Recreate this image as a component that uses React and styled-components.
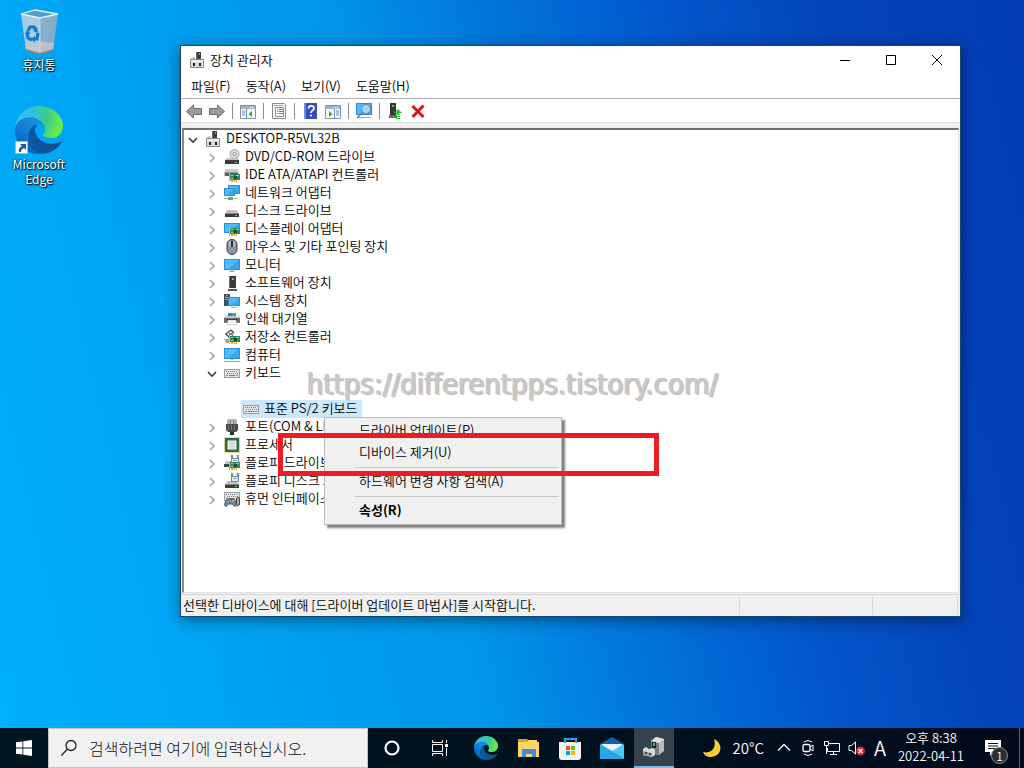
import { useState } from "react";
import styled, { createGlobalStyle, css } from "styled-components";

const GlobalStyle = createGlobalStyle`
  * {
    box-sizing: border-box;
  }
  body {
    margin: 0;
    font-family: "Noto Sans CJK KR", "Noto Sans", sans-serif;
    font-size: 13px;
    font-weight: 350;
    line-height: 18px;
    color: #000;
  }
  button, input {
    margin: 0;
    padding: 0;
    border: 0;
    background: none;
    font: inherit;
    color: inherit;
  }
`;

/* ---------- shared icon pieces ---------- */

const Monitor = ({ x = 0, y = 2, w = 16, h = 11 }) => (
  <g>
    <rect x={x} y={y} width={w} height={h} fill="#2b8fd8" />
    <rect x={x + 1} y={y + 1} width={w - 2} height={h - 2} fill="#52b9fc" />
    <path
      d={`M${x + w - 1} ${y + 1}v${h - 2}H${x + 4}z`}
      fill="#3aa6f2"
    />
  </g>
);

const Drive = ({ y = 8 }) => (
  <g>
    <path d={`M3 ${y}h10l2 4H1z`} fill="#c3c3c3" />
    <path d={`M1 ${y + 3}h14v4H1z`} fill="#3b3b3b" />
    <path d={`M1 ${y + 3}h14v1H1z`} fill="#8a8a8a" />
    <path d={`M11 ${y + 5}h2v1h-2z`} fill="#3be05a" />
  </g>
);

const Card = () => (
  <g>
    <path d="M5 6h1v9H5z" fill="#bdbdbd" />
    <path d="M6 7h10v6H6z" fill="#2d8a5e" />
    <path d="M7 8h2v1H7zM12 8h3v1h-3zM7 11h2v1H7z" fill="#8ad4b0" />
    <path d="M10 9h3v3h-3z" fill="#14503a" />
    <path d="M7 13h6v2H7z" fill="#f3a91b" />
    <path d="M9 13h1v2H9zM11 13h1v2h-1z" fill="#fbd88a" />
  </g>
);

const Floppy = () => (
  <g>
    <path d="M7 0h8v9H7z" fill="#7b8895" />
    <path d="M9 0h4v3H9z" fill="#eef3f7" />
    <path d="M8 4h6v4H8z" fill="#dfe9f1" />
    <path d="M9 5h4v1H9z" fill="#74a7d4" />
  </g>
);

const Keys = ({ y = 4 }) => (
  <g>
    <rect x="0" y={y} width="16" height="9" fill="#9a9fa3" />
    <rect x="1" y={y + 1} width="14" height="7" fill="#e4e6e8" />
    <path
      d={`M2 ${y + 2.5}h12M3 ${y + 4.5}h11`}
      stroke="#7c8185"
      strokeDasharray="1 1"
    />
    <path d={`M2 ${y + 6.5}h2M5 ${y + 6.5}h6M12 ${y + 6.5}h2`} stroke="#7c8185" />
  </g>
);

const DeviceShape = () => (
  <g>
    <path d="M2 7q0-2 2-2h2v3H2z" fill="#c9c9c9" />
    <path d="M7 0h5v8H7z" fill="#3d3d3d" />
    <path d="M7 0h1v8H7z" fill="#6b6b6b" />
    <path d="M10 1h1v2h-1z" fill="#38e04c" />
    <path d="M1.500 7.500h13v8h-13z" fill="#d9d9d9" stroke="#8a8a8a" />
    <path d="M2 8h12v2H2z" fill="#efefef" />
    <path d="M4 11h2v3H4zM10 11h2v3h-2z" fill="#222" />
  </g>
);

const GLYPHS = {
  root: <DeviceShape />,
  dvd: (
    <g>
      <path d="M3 9h10l2 3H1z" fill="#c3c3c3" />
      <circle cx="10.500" cy="5" r="4.500" fill="#dcdcdc" stroke="#a2a2a2" />
      <circle cx="10.500" cy="5" r="1.500" fill="#fff" stroke="#8a8a8a" />
      <path d="M3 9h11l1 2H1z" fill="#c3c3c3" />
      <path d="M1 11h14v4H1z" fill="#3b3b3b" />
      <path d="M11 13h2v1h-2z" fill="#3be05a" />
    </g>
  ),
  ide: (
    <g>
      <path d="M2 2h11l2 3v4H0V5z" fill="#cbcbcb" />
      <path d="M1 5h13v4H1z" fill="#5a5a5a" />
      <path d="M1 5h13v1H1z" fill="#999" />
      <Card />
    </g>
  ),
  network: (
    <g>
      <Monitor x={4} y={0} w={12} h={9} />
      <path d="M0 3h11v9H0z" fill="#fff" />
      <Monitor x={0} y={3} w={11} h={8} />
      <path d="M0 13h14v1H0z" fill="#9fb7a6" />
      <path d="M4 12h5v3H4z" fill="#46c25c" />
    </g>
  ),
  disk: <Drive y={7} />,
  display: (
    <g>
      <Monitor x={0} y={2} w={16} h={10} />
      <Card />
    </g>
  ),
  mouse: (
    <g>
      <rect x="3" y="0.500" width="10" height="15" rx="5" fill="#8793a0" stroke="#343a42" />
      <path d="M5 2.500h2v5H5zM9 2.500h2v5H9z" fill="#b9c3cc" />
      <rect x="7" y="2" width="2" height="6" rx="1" fill="#1d2228" />
    </g>
  ),
  monitor: (
    <g>
      <Monitor />
      <path d="M7 13h2v1h2v1H5v-1h2z" fill="#9fb4c4" />
    </g>
  ),
  software: (
    <g>
      <path d="M5 1h7v12H5z" fill="#3b3b3b" />
      <path d="M5 1h1v12H5z" fill="#727272" />
      <path d="M8 3h2v2H8z" fill="#35e04c" />
      <path d="M4 14h9v2H4z" fill="#555" />
    </g>
  ),
  system: (
    <g>
      <path d="M0 1h6v12H0z" fill="#4b4f53" />
      <path d="M1 4h4v1H1zM1 6h4v1H1z" fill="#a2a6a9" />
      <path d="M2 2h2v1H2z" fill="#3be05a" />
      <Monitor x={4} y={4} w={12} h={9} />
      <path d="M7 14h6v1H7z" fill="#9fb4c4" />
    </g>
  ),
  printer: (
    <g>
      <path d="M4 2h8v4H4z" fill="#2a86d6" />
      <path d="M8 2h3v4H8z" fill="#37b56b" />
      <path d="M2 5h12l2 2v5H0V7z" fill="#6c6f72" />
      <path d="M1 5h14v2H1z" fill="#c7cacc" />
      <path d="M3 8h10v2H3z" fill="#222" />
      <path d="M4 9h8l1 5H3z" fill="#f7f7f7" stroke="#b8b8b8" strokeWidth="0.500" />
    </g>
  ),
  storage: (
    <g>
      <path d="M7 1 2 5l4 4 3-2.500" fill="none" stroke="#4f4f4f" strokeWidth="1.500" />
      <path d="M5 5h4M7 1l3 3" fill="none" stroke="#4f4f4f" strokeWidth="1.500" />
      <path d="M0 10h5v4H2z" fill="#a4a4a4" />
      <Card />
    </g>
  ),
  computer: (
    <g>
      <Monitor x={0} y={1} w={16} h={11} />
      <path d="M6 12h4v1H6z" fill="#b7c6d1" />
      <path d="M0 14h16v1H0z" fill="#8fa9bf" />
    </g>
  ),
  keyboard: <Keys />,
  port: (
    <g>
      <path d="M4 1h8v4H4z" fill="#d2d2d2" stroke="#7a7a7a" />
      <path d="M6 2h1v2H6zM9 2h1v2H9z" fill="#555" />
      <path d="M2 5h12v6l-2 2H4l-2-2z" fill="#4a4a4a" />
      <path d="M4 6h1v5H4zM7 6h1v5H7zM10 6h1v5h-1z" fill="#757575" />
      <path d="M6 13h4v3H6z" fill="#2d2d2d" />
    </g>
  ),
  cpu: (
    <g>
      <rect x="1" y="1" width="14" height="14" fill="#2c6b4a" />
      <rect
        x="0.500"
        y="0.500"
        width="15"
        height="15"
        fill="none"
        stroke="#d0a53c"
        strokeDasharray="1 1"
      />
      <rect x="4" y="4" width="8" height="8" fill="#dcdcdc" stroke="#f6f6f6" />
    </g>
  ),
  floppyController: (
    <g>
      <path d="M2 6h6v4H0z" fill="#c3c3c3" />
      <path d="M0 9h6v3H0z" fill="#444" />
      <Floppy />
      <Card />
    </g>
  ),
  floppy: (
    <g>
      <Drive y={8} />
      <Floppy />
    </g>
  ),
  hid: (
    <g>
      <Keys y={1} />
      <path
        d="M1 15c-1-2 1-7 3-7h5c2 0 4 5 3 7s-3-2-4-2H5c-1 0-3 4-4 2z"
        fill="#7d8791"
        stroke="#50575e"
      />
      <path d="M4 9h1v3H4zM3 10h3v1H3z" fill="#46a7f0" />
      <path d="M8 9h2v2H8z" fill="#f0a030" />
      <rect x="12.500" y="6.500" width="3" height="8" rx="1.500" fill="#aab2ba" stroke="#3d444b" />
    </g>
  ),
};

const Svg = styled.svg`
  display: block;
  flex: none;
  width: ${({ $size = 16 }) => $size}px;
  height: ${({ $size = 16 }) => $size}px;
`;

const Glyph = ({ name }) => (
  <Svg viewBox="0 0 16 16" aria-hidden="true">
    {GLYPHS[name]}
  </Svg>
);

const EdgeLogo = ({ id, size }) => (
  <Svg viewBox="0 0 256 256" $size={size} aria-hidden="true">
    <defs>
      <linearGradient id={`${id}-a`} x1="58" y1="177" x2="236" y2="177" gradientUnits="userSpaceOnUse">
        <stop offset="0" stopColor="#0c59a4" />
        <stop offset="1" stopColor="#114a8b" />
      </linearGradient>
      <linearGradient id={`${id}-b`} x1="140" y1="90" x2="45" y2="215" gradientUnits="userSpaceOnUse">
        <stop offset="0" stopColor="#1b8fd6" />
        <stop offset="0.500" stopColor="#127fd6" />
        <stop offset="1" stopColor="#0067c2" />
      </linearGradient>
      <radialGradient id={`${id}-c`} cx="26" cy="46" r="240" gradientUnits="userSpaceOnUse">
        <stop offset="0" stopColor="#35c1f1" />
        <stop offset="0.300" stopColor="#2fc2df" />
        <stop offset="0.600" stopColor="#3acb8c" />
        <stop offset="0.900" stopColor="#66eb4e" />
      </radialGradient>
    </defs>
    <path
      fill={`url(#${id}-b)`}
      d="M105.700 241.400c-8.900-5.500-16.600-12.800-22.700-21.300-26.300-36-18.400-86.500 17.600-112.800 3.800-2.700 7.700-5.200 11.900-7.200 3.100-1.500 8.400-4.100 15.500-4 10.100.1 19.600 4.900 25.700 13 4 5.400 6.300 11.900 6.400 18.700 0-.2 24.500-79.600-80-79.600-43.900 0-80 41.700-80 78.200-.2 19.300 4 38.500 12.100 56 27.600 58.800 94.800 87.600 156.400 67.100-21.100 6.600-44.100 3.700-62.900-8.100z"
    />
    <path
      fill={`url(#${id}-a)`}
      d="M231 190.500c-3.400 1.800-6.900 3.400-10.500 4.700-11.500 4.300-23.700 6.500-36 6.500-47.400 0-88.700-32.600-88.700-74.400.1-11.400 6.400-21.900 16.400-27.300-42.900 1.800-53.900 46.500-53.900 72.700 0 74.100 68.300 81.600 83 81.600 7.900 0 19.800-2.300 27-4.600l1.300-.4c27.600-9.500 51-28.100 66.600-52.800 1.200-1.900.6-4.300-1.200-5.500-1.300-.8-2.800-.8-4-.5z"
      transform="translate(11 0)"
    />
    <path
      fill={`url(#${id}-c)`}
      d="M152.300 148.900c-.9 1-3.300 2.500-3.300 5.600 0 2.600 1.700 5.100 4.700 7.200 14.400 10 41.500 8.700 41.600 8.700 10.700 0 21.100-2.900 30.300-8.300 18.800-11 30.400-31.100 30.400-52.900.3-22.400-8-37.300-11.300-43.900C223.500 23.900 177.700 0 128 0 58 0 1 56.200 0 126.200c.5-36.500 36.800-66 80-66 3.500 0 23.500.3 42 10.100 16.300 8.600 24.900 18.900 30.800 29.200 6.200 10.700 7.300 24.100 7.300 29.500.1 5.300-2.800 13.300-7.800 19.900z"
    />
  </Svg>
);

const BinIcon = () => (
  <Svg viewBox="0 0 48 48" $size={48} aria-hidden="true">
    <path d="M6 7 25 11 25 46 11 43z" fill="#a9cbe2" />
    <path d="M43 7 25 11 25 46 38 43z" fill="#84aecb" />
    <path d="M6 7 20 3 43 7 25 11z" fill="#4fa0cf" />
    <path d="M10 37 24 34 39 36 38 43 25 46 11 43z" fill="#c9c6c8" opacity="0.800" />
    <path d="m11 42 14 4 13-4v2l-13 4-14-4z" fill="#8c8583" />
    <path d="M6 7 20 3 43 7 25 11z" fill="none" stroke="#dff1fb" strokeWidth="1.300" />
    <path d="M25 11v34" stroke="#c6dfee" strokeWidth="0.800" />
    <g fill="none" stroke="#1279cf" strokeWidth="3.200">
      <path d="m13 24 2-4h4l2 3" />
      <path d="m12 26 1 5 4 2" />
      <path d="m23 26-1 6h-3" />
    </g>
    <path d="m22 20 1 6-5-2zM10 27l2-4 4 4zM20 29v7l-4-4z" fill="#1279cf" />
  </Svg>
);

const ShortcutArrow = styled.span`
  position: absolute;
  left: 0;
  bottom: 0;
  display: grid;
  place-items: center;
  width: 13px;
  height: 13px;
  border: 1px solid #b5b5b5;
  background: #f8f8f8;
`;

/* ---------- toolbar drawings ---------- */

const Panel = ({ arrow }) => (
  <g>
    <path d="M0.500 2.500h15v13h-15z" fill="#fafafa" stroke="#87919b" />
    <path d="M1 3h14v3H1z" fill="#a8b4bf" />
    <path d="M10 4h1v1h-1zM12 4h1v1h-1z" fill="#fff" />
    {arrow === "left" ? (
      <g>
        <path d="M2 8h3M2 10h3M2 12h3M6.500 6v9" stroke="#5a8fca" />
        <path d="M12 8v6l-3.500-3z" fill="#3cad2d" />
      </g>
    ) : (
      <g>
        <path d="M11 8h3M11 10h3M11 12h3M9.500 6v9" stroke="#5a8fca" />
        <path d="M4 8v6l3.500-3z" fill="#3cad2d" />
      </g>
    )}
  </g>
);

const arrowPath = "M0.500 8.500 7.500 2v3.500h8v6h-8V15z";

const TOOLS = [
  [
    { label: "뒤로", art: <path d={arrowPath} fill="#9b9b9b" stroke="#6b6b6b" /> },
    {
      label: "앞으로",
      art: (
        <path
          d={arrowPath}
          fill="#9b9b9b"
          stroke="#6b6b6b"
          transform="matrix(-1 0 0 1 16 0)"
        />
      ),
    },
  ],
  [{ label: "콘솔 트리 표시/숨기기", art: <Panel arrow="left" /> }],
  [
    {
      label: "속성",
      art: (
        <g>
          <path d="M1.500 0.500h12l1 1v14h-13z" fill="#f4f4f4" stroke="#8b8b8b" />
          <path d="M3 2.500h9" stroke="#a9a9a9" />
          <path d="M4.500 4.500h8v9h-8z" fill="#fff" stroke="#7f95aa" />
          <path d="M6 6.500h1M8 6.500h4M6 8.500h1M8 8.500h4M6 10.500h1M8 10.500h4" stroke="#5a83ae" />
        </g>
      ),
    },
  ],
  [
    {
      label: "도움말",
      art: (
        <g>
          <path d="M2 0h13v16H2z" fill="#3350b8" />
          <path d="M2 0h2v16H2z" fill="#6f8fe6" />
          <path
            d="M6.500 5.500c0-3.500 5.500-3.500 5.500 0 0 2-3 2-3 4.500"
            fill="none"
            stroke="#fff"
            strokeWidth="1.600"
          />
          <circle cx="9" cy="12.500" r="1.100" fill="#fff" />
        </g>
      ),
    },
    { label: "작업 창 표시/숨기기", art: <Panel arrow="right" /> },
  ],
  [
    {
      label: "하드웨어 변경 사항 검색",
      art: (
        <g>
          <Monitor x={0} y={0} w={16} h={12} />
          <path d="M2 14h13v1H2z" fill="#8fa9bf" />
          <circle cx="10" cy="6" r="4.500" fill="#9fd8fb" stroke="#6f8aa0" />
          <path d="m7 9-6 6" stroke="#78838c" strokeWidth="1.600" />
        </g>
      ),
    },
  ],
  [
    {
      label: "드라이버 업데이트",
      art: (
        <g>
          <path d="M3 0h6v12H3z" fill="#363636" />
          <path d="M5 2h2v2H5z" fill="#35e04c" />
          <path d="M2 12h8v3H2z" fill="#6a6a6a" />
          <path d="M11 6l4 4h-2.500v2h-3v-2H7zM9 13h4v1H9zM9 15h4v1H9z" fill="#2dc02d" />
        </g>
      ),
    },
    {
      label: "디바이스 제거",
      art: <path d="m2.500 3 11 11M13.500 2.500 2.500 14" stroke="#d8141c" strokeWidth="3" />,
    },
  ],
];

const MENUS = ["파일(F)", "동작(A)", "보기(V)", "도움말(H)"];

const DEVICES = [
  { icon: "dvd", name: "DVD/CD-ROM 드라이브" },
  { icon: "ide", name: "IDE ATA/ATAPI 컨트롤러" },
  { icon: "network", name: "네트워크 어댑터" },
  { icon: "disk", name: "디스크 드라이브" },
  { icon: "display", name: "디스플레이 어댑터" },
  { icon: "mouse", name: "마우스 및 기타 포인팅 장치" },
  { icon: "monitor", name: "모니터" },
  { icon: "software", name: "소프트웨어 장치" },
  { icon: "system", name: "시스템 장치" },
  { icon: "printer", name: "인쇄 대기열" },
  { icon: "storage", name: "저장소 컨트롤러" },
  { icon: "computer", name: "컴퓨터" },
  { icon: "keyboard", name: "키보드", children: ["표준 PS/2 키보드"] },
  { icon: "port", name: "포트(COM & LPT)" },
  { icon: "cpu", name: "프로세서" },
  { icon: "floppyController", name: "플로피 드라이브 컨트롤러" },
  { icon: "floppy", name: "플로피 디스크 드라이브" },
  { icon: "hid", name: "휴먼 인터페이스 장치" },
];

const Toggle = ({ open, onClick, label }) => (
  <Chevron type="button" aria-label={label} aria-expanded={open} onClick={onClick}>
    <Svg viewBox="0 0 12 12" $size={12}>
      <path
        d={open ? "m2 4 4 4 4-4" : "m4 2 4 4-4 4"}
        fill="none"
        stroke={open ? "#404040" : "#a6a6a6"}
        strokeWidth="1.700"
      />
    </Svg>
  </Chevron>
);

const DeviceTree = () => {
  const [opened, setOpened] = useState({ 키보드: true });

  const toggle = (name) =>
    setOpened((prev) => ({ ...prev, [name]: !prev[name] }));

  return (
    <Tree>
      <Row>
        <Toggle open label="DESKTOP-R5VL32B" />
        <Glyph name="root" />
        <RowName>DESKTOP-R5VL32B</RowName>
      </Row>
      <Branch>
        {DEVICES.map((device) => (
          <li key={device.name}>
            <Row>
              <Toggle
                open={!!opened[device.name]}
                label={device.name}
                onClick={() => toggle(device.name)}
              />
              <Glyph name={device.icon} />
              <RowName>{device.name}</RowName>
            </Row>
            {opened[device.name] && device.children && (
              <Leaves>
                {device.children.map((child) => (
                  <Leaf key={child}>
                    <Glyph name={device.icon} />
                    <RowName>{child}</RowName>
                  </Leaf>
                ))}
              </Leaves>
            )}
          </li>
        ))}
      </Branch>
    </Tree>
  );
};

const DeviceManager = () => (
  <Window>
    <TitleBar>
      <Glyph name="root" />
      <Title>장치 관리자</Title>
      <Caption type="button" aria-label="최소화">
        <Svg viewBox="0 0 12 12" $size={12}>
          <path d="M1 6.500h10" stroke="#000" />
        </Svg>
      </Caption>
      <Caption type="button" aria-label="최대화">
        <Svg viewBox="0 0 12 12" $size={12}>
          <path d="M1.500 1.500h9v9h-9z" fill="none" stroke="#000" />
        </Svg>
      </Caption>
      <Caption type="button" aria-label="닫기">
        <Svg viewBox="0 0 12 12" $size={12}>
          <path d="m1 1 10 10M11 1 1 11" stroke="#000" />
        </Svg>
      </Caption>
    </TitleBar>
    <MenuBar>
      {MENUS.map((menu) => (
        <button type="button" key={menu}>
          {menu}
        </button>
      ))}
    </MenuBar>
    <Toolbar>
      {TOOLS.map((group) => (
        <ToolGroup key={group[0].label}>
          {group.map((tool) => (
            <button type="button" key={tool.label} aria-label={tool.label}>
              <Svg viewBox="0 0 16 16">{tool.art}</Svg>
            </button>
          ))}
        </ToolGroup>
      ))}
    </Toolbar>
    <Client>
      <DeviceTree />
    </Client>
    <StatusBar>
      <StatusText>선택한 디바이스에 대해 [드라이버 업데이트 마법사]를 시작합니다.</StatusText>
      <StatusCell $width={133} />
      <StatusCell $width={85} />
    </StatusBar>
    <Watermark>https://differentpps.tistory.com/</Watermark>
    <ContextMenu>
      <MenuItem type="button">드라이버 업데이트(P)</MenuItem>
      <MenuItem type="button">디바이스 제거(U)</MenuItem>
      <Divider />
      <MenuItem type="button">하드웨어 변경 사항 검색(A)</MenuItem>
      <Divider />
      <MenuItem type="button" $strong>
        속성(R)
      </MenuItem>
    </ContextMenu>
    <Highlight />
  </Window>
);

const Taskbar = () => (
  <Bar>
    <BarButton type="button" aria-label="시작" $width={48}>
      <Svg viewBox="0 0 16 16" fill="#fff">
        <path d="M0 2.300 6.500 1.400v6.200H0zM7.300 1.300 16 0v7.600H7.300zM0 8.400h6.500v6.200L0 13.700zM7.300 8.400H16V16l-8.700-1.300z" />
      </Svg>
    </BarButton>
    <SearchBox>
      <Svg viewBox="0 0 18 18" $size={18}>
        <circle cx="11" cy="6.500" r="5" fill="none" stroke="#222" strokeWidth="1.300" />
        <path d="m7.300 10.200-6 6.300" stroke="#222" strokeWidth="1.300" />
      </Svg>
      <SearchInput aria-label="검색" placeholder="검색하려면 여기에 입력하십시오." />
    </SearchBox>
    <BarButton type="button" aria-label="Cortana" $width={48}>
      <Svg viewBox="0 0 16 16">
        <circle cx="8" cy="8" r="6.500" fill="none" stroke="#fff" strokeWidth="2.200" />
      </Svg>
    </BarButton>
    <BarButton type="button" aria-label="작업 보기" $width={48}>
      <Svg viewBox="0 0 16 16" fill="none" stroke="#fff">
        <path d="M0.500 0v2.500h10V0M0.500 16v-2.500h10V16M0.500 4.500h10v7h-10zM14.500 0v3M14.500 8v8" />
        <path d="M13 4h3v3h-3z" fill="#fff" stroke="none" />
      </Svg>
    </BarButton>
    <Pinned>
      <BarButton type="button" aria-label="Microsoft Edge">
        <EdgeLogo id="task" size={24} />
      </BarButton>
      <BarButton type="button" aria-label="파일 탐색기">
        <Svg viewBox="0 0 24 24" $size={24}>
          <path d="M2 4h19v2h2v15H2z" fill="#fdd467" />
          <path d="M2 3h9l1 1v2H2z" fill="#e5a50d" />
          <path d="M6 13h14v8h-4v-3h-6v3H6z" fill="#3d8fd6" />
        </Svg>
      </BarButton>
      <BarButton type="button" aria-label="Microsoft Store">
        <Svg viewBox="0 0 24 24" $size={24}>
          <path d="M1 6h22v15q0 3-3 3H4q-3 0-3-3z" fill="#f3f3f3" />
          <path d="M7 7V3h11v4" fill="none" stroke="#1aa5e8" strokeWidth="2" />
          <path d="M8 10h4v4H8z" fill="#f25022" />
          <path d="M13 10h4v4h-4z" fill="#7fba00" />
          <path d="M8 15h4v4H8z" fill="#00a4ef" />
          <path d="M13 15h4v4h-4z" fill="#ffb900" />
        </Svg>
      </BarButton>
      <BarButton type="button" aria-label="메일">
        <Svg viewBox="0 0 24 24" $size={24}>
          <path d="M0 8 12 1l12 7v3H0z" fill="#1160ac" />
          <path d="M2 8h20v9H2z" fill="#f0f0f0" />
          <path d="M0 8v15h24L12 15z" fill="#29a8ec" />
          <path d="M24 8v15L12 15z" fill="#50c8f6" />
          <path d="m12 15 12 8H0z" fill="#2ba5ea" />
        </Svg>
      </BarButton>
      <BarButton type="button" aria-label="장치 관리자" $active>
        <Svg viewBox="0 0 24 24" $size={24}>
          <path d="m9 6 5-4 8 2v12l-5 4-8-2z" fill="#b9b9b9" />
          <path d="m9 6 8 2v12l-8-2z" fill="#7a7a7a" />
          <path d="m9 6 5-4 8 2-5 4z" fill="#dedede" />
          <path d="M10 7h4v6h-4z" fill="#232323" />
          <path d="M11 8h2v3h-2z" fill="#2ed04a" />
          <path d="m1 14 3-2 3 2 4-1 2 2v5l-3 2-9-2z" fill="#d9d9d9" />
          <path d="m1 16 9 2v4l-9-2z" fill="#a1a1a1" />
          <path d="M3 17h2v2H3zM7 18h2v2H7z" fill="#444" />
        </Svg>
      </BarButton>
    </Pinned>
    <Weather type="button">
      <Svg viewBox="0 0 20 20" $size={20}>
        <path d="M12 1c9 4 9 17-3 18-4 0-7-2-8-5 8 2 14-4 11-13z" fill="#ffd234" />
        <path d="M1 14c6 3 14 0 15-7 1 8-9 13-15 7z" fill="#f7a91e" opacity="0.500" />
      </Svg>
      20°C
    </Weather>
    <Tray>
      <Svg viewBox="0 0 16 16" fill="none" stroke="#fff">
        <path d="m2 10.500 6-6 6 6" strokeWidth="1.300" />
      </Svg>
      <Svg viewBox="0 0 16 16" fill="none" stroke="#fff">
        <rect x="3" y="4.500" width="7" height="7" rx="1.500" strokeWidth="1.300" />
        <path d="m10 7 3-2v6l-3-2M4 2q4-3 8 0M4 14q4 3 8 0" />
      </Svg>
      <Svg viewBox="0 0 16 16" fill="none" stroke="#fff">
        <path d="M5 3.500h10.500v8H3.500V8M9.500 11.500v3M6 14.500h7M0.500 1.500h4v4h-4zM2.500 5.500V14" />
      </Svg>
      <Svg viewBox="0 0 18 18" $size={18}>
        <path d="M1 6.500h2.500L7.500 3v12l-4-3.500H1z" fill="none" stroke="#fff" />
        <circle cx="12.500" cy="12" r="4.500" fill="#e0262e" />
        <path d="m10.500 10 4 4m0-4-4 4" stroke="#fff" strokeWidth="1.300" />
      </Svg>
      <Ime>A</Ime>
    </Tray>
    <Clock>
      <span>오후 8:38</span>
      <span>2022-04-11</span>
    </Clock>
    <Notice type="button" aria-label="알림 1개">
      <Svg viewBox="0 0 16 16" fill="#fff">
        <path d="M0 0h16v12H8l-3 4v-4H0z" />
        <path d="M3 3.500h10M3 6h10M3 8.500h10" stroke="#06111c" />
      </Svg>
      <Badge>1</Badge>
    </Notice>
    <PeekStrip type="button" aria-label="바탕 화면 보기" />
  </Bar>
);

const App = () => (
  <Screen>
    <GlobalStyle />
    <Desktop>
      <Shortcuts>
        <Shortcut type="button">
          <BinIcon />
          <span>휴지통</span>
        </Shortcut>
        <Shortcut type="button">
          <ShortcutArt>
            <EdgeLogo id="desk" size={48} />
            <ShortcutArrow>
              <Svg viewBox="0 0 10 10" $size={10}>
                <path d="M3 1h6v6L7 5Q4 6 4 9H2q-1-4 3-6z" fill="#2a5699" />
              </Svg>
            </ShortcutArrow>
          </ShortcutArt>
          <span>Microsoft Edge</span>
        </Shortcut>
      </Shortcuts>
      <DeviceManager />
    </Desktop>
    <Taskbar />
  </Screen>
);

export default App;

/* ---------- styles ---------- */

const Screen = styled.div`
  display: flex;
  flex-direction: column;
  min-height: 100vh;
`;

const Desktop = styled.main`
  position: relative;
  flex: 1;
  overflow: hidden;
  background: linear-gradient(
    77deg,
    #00b0fa 0%,
    #00a7f6 16%,
    #009cef 30%,
    #0096ea 41%,
    #027cde 52%,
    #0168d4 61%,
    #0354c8 71%,
    #0344bc 83%,
    #033cb5 100%
  );
`;

const Shortcuts = styled.nav`
  display: flex;
  flex-direction: column;
  gap: 23px;
  width: 78px;
  padding-top: 7px;
`;

const Shortcut = styled.button`
  display: flex;
  flex-direction: column;
  align-items: center;
  gap: 2px;
  min-height: 76px;
  color: #fff;
  font-size: 12px;
  font-weight: 400;
  line-height: 15px;
  text-shadow: 1px 1px 1px #000, 0 0 3px rgba(0, 0, 0, 0.8);
`;

const ShortcutArt = styled.span`
  position: relative;
`;

const Window = styled.section`
  position: absolute;
  top: 45px;
  right: 63px;
  bottom: 111px;
  left: 180px;
  display: flex;
  flex-direction: column;
  border: 1px solid #17466f;
  background: #f0f0f0;
  box-shadow: 0 3px 14px rgba(0, 0, 0, 0.45);
`;

const TitleBar = styled.header`
  display: flex;
  align-items: center;
  height: 30px;
  padding: 0 0 2px 8px;
  background: #fff;
`;

const Title = styled.h1`
  flex: 1;
  margin: 0;
  padding-left: 5px;
  font-size: 13px;
  font-weight: 350;
`;

const Caption = styled.button`
  display: grid;
  place-items: center;
  width: 46px;
  height: 28px;
`;

const MenuBar = styled.nav`
  display: flex;
  align-items: center;
  gap: 15px;
  height: 23px;
  padding: 0 10px 2px;
  border-bottom: 1px solid #b0b0b0;
  background: #fff;
`;

const Toolbar = styled.div`
  display: flex;
  align-items: center;
  height: 24px;
  padding-left: 5px;
  border-bottom: 1px solid #dcdcdc;
  background: #fff;
`;

const ToolGroup = styled.div`
  display: flex;
  gap: 7px;
  padding-right: 7px;

  & + & {
    padding-left: 7px;
    border-left: 1px solid #8c8c8c;
  }
`;

const Client = styled.div`
  flex: 1;
  min-height: 0;
  margin: 5px 1px 1px;
  overflow: hidden;
  border: 1px solid;
  border-width: 2px 1px 1px 2px;
  border-color: #707070 #e3e3e3 #e3e3e3 #8a8a8a;
  background: #fff;
`;

const Tree = styled.div`
  padding-left: 1px;
`;

const Row = styled.div`
  display: flex;
  align-items: center;
  gap: 4px;
  height: 18px;
  white-space: nowrap;
`;

const RowName = styled.span`
  padding: 0 0 2px 1px;
`;

const Chevron = styled.button`
  display: grid;
  place-items: center;
  width: 16px;
  height: 18px;
  padding-top: 2px;
`;

const Branch = styled.ul`
  margin: 0;
  padding: 0 0 0 19px;
  list-style: none;
`;

const Leaves = styled.ul`
  margin: 0;
  padding: 18px 0 0 37px;
  list-style: none;
`;

const Leaf = styled.li`
  display: flex;
  align-items: center;
  gap: 4px;
  width: max-content;
  height: 18px;
  padding: 0 4px 0 2px;
  background: #cce8ff;
`;

const StatusBar = styled.footer`
  display: flex;
  height: 22px;
  padding: 1px 2px 1px 0;
  border-top: 1px solid #d7d7d7;
`;

const StatusText = styled.div`
  flex: 1;
  padding-left: 2px;
  border-right: 1px solid #d7d7d7;
`;

const StatusCell = styled.div`
  width: ${({ $width }) => $width}px;
  border-right: 1px solid #d7d7d7;
`;

const Watermark = styled.div`
  position: absolute;
  top: 320px;
  left: 125px;
  color: #c8c8c8;
  font-family: "DejaVu Sans Condensed", "DejaVu Sans", sans-serif;
  font-size: 29px;
  font-weight: 400;
  line-height: 36px;
  white-space: nowrap;
  text-shadow: 1px 0 0 #c8c8c8, 2px 1px 1px #b8b8b8;
`;

const ContextMenu = styled.div`
  position: absolute;
  top: 371px;
  left: 143px;
  display: flex;
  flex-direction: column;
  width: 238px;
  padding: 2px;
  border: 1px solid #bdbdbd;
  background: #f0f0f0;
  box-shadow: 3px 3px 2px rgba(0, 0, 0, 0.5);
`;

const MenuItem = styled.button`
  height: 22px;
  padding: 0 0 2px 32px;
  text-align: left;
  ${({ $strong }) =>
    $strong &&
    css`
      font-weight: 700;
    `}
`;

const Divider = styled.hr`
  width: auto;
  height: 1px;
  margin: 3px 0 3px 28px;
  border: 0;
  background: #c8c8c8;
`;

const Highlight = styled.div`
  position: absolute;
  top: 387px;
  left: 97px;
  width: 381px;
  height: 43px;
  border: 5px solid #ed1c24;
  pointer-events: none;
`;

const Bar = styled.footer`
  display: flex;
  height: 40px;
  background: linear-gradient(90deg, #001721, #00111d 60%, #020a1c);
  color: #fff;
`;

const BarButton = styled.button`
  display: grid;
  place-items: center;
  width: ${({ $width = 40 }) => $width}px;
  height: 40px;
  ${({ $active }) =>
    $active &&
    css`
      border-bottom: 2px solid #76b9ed;
      background: #34424d;
    `}
`;

const SearchBox = styled.label`
  display: flex;
  align-items: center;
  gap: 11px;
  flex: 0 1 320px;
  padding: 0 11px;
  border: 1px solid #c2c2c2;
  background: #f1f1f1;
`;

const SearchInput = styled.input`
  flex: 1;
  min-width: 0;
  color: #222;
  font-size: 16px;
  font-weight: 300;
  line-height: 24px;
  outline: 0;

  &::placeholder {
    color: #111;
    opacity: 1;
  }
`;

const Pinned = styled.div`
  display: flex;
  gap: 2px;
  padding-left: 2px;
`;

const Weather = styled.button`
  display: flex;
  align-items: center;
  gap: 10px;
  margin-left: auto;
  font-size: 15px;
`;

const Tray = styled.div`
  display: flex;
  align-items: center;
  gap: 8px;
  padding-left: 12px;
`;

const Ime = styled.span`
  font-size: 20px;
`;

const Clock = styled.time`
  display: flex;
  flex-direction: column;
  align-items: center;
  padding: 1px 11px 0 12px;
  font-size: 13px;
`;

const Notice = styled.button`
  position: relative;
  display: grid;
  place-items: center;
  width: 36px;
  height: 40px;
`;

const Badge = styled.span`
  position: absolute;
  right: 3px;
  bottom: 4px;
  width: 17px;
  height: 17px;
  border: 1px solid #8a8f94;
  border-radius: 50%;
  background: #2a2f35;
  font-size: 12px;
  line-height: 15px;
  text-align: center;
`;

const PeekStrip = styled.button`
  width: 5px;
  margin-left: 8px;
  border-left: 1px solid #5b626b;
`;
